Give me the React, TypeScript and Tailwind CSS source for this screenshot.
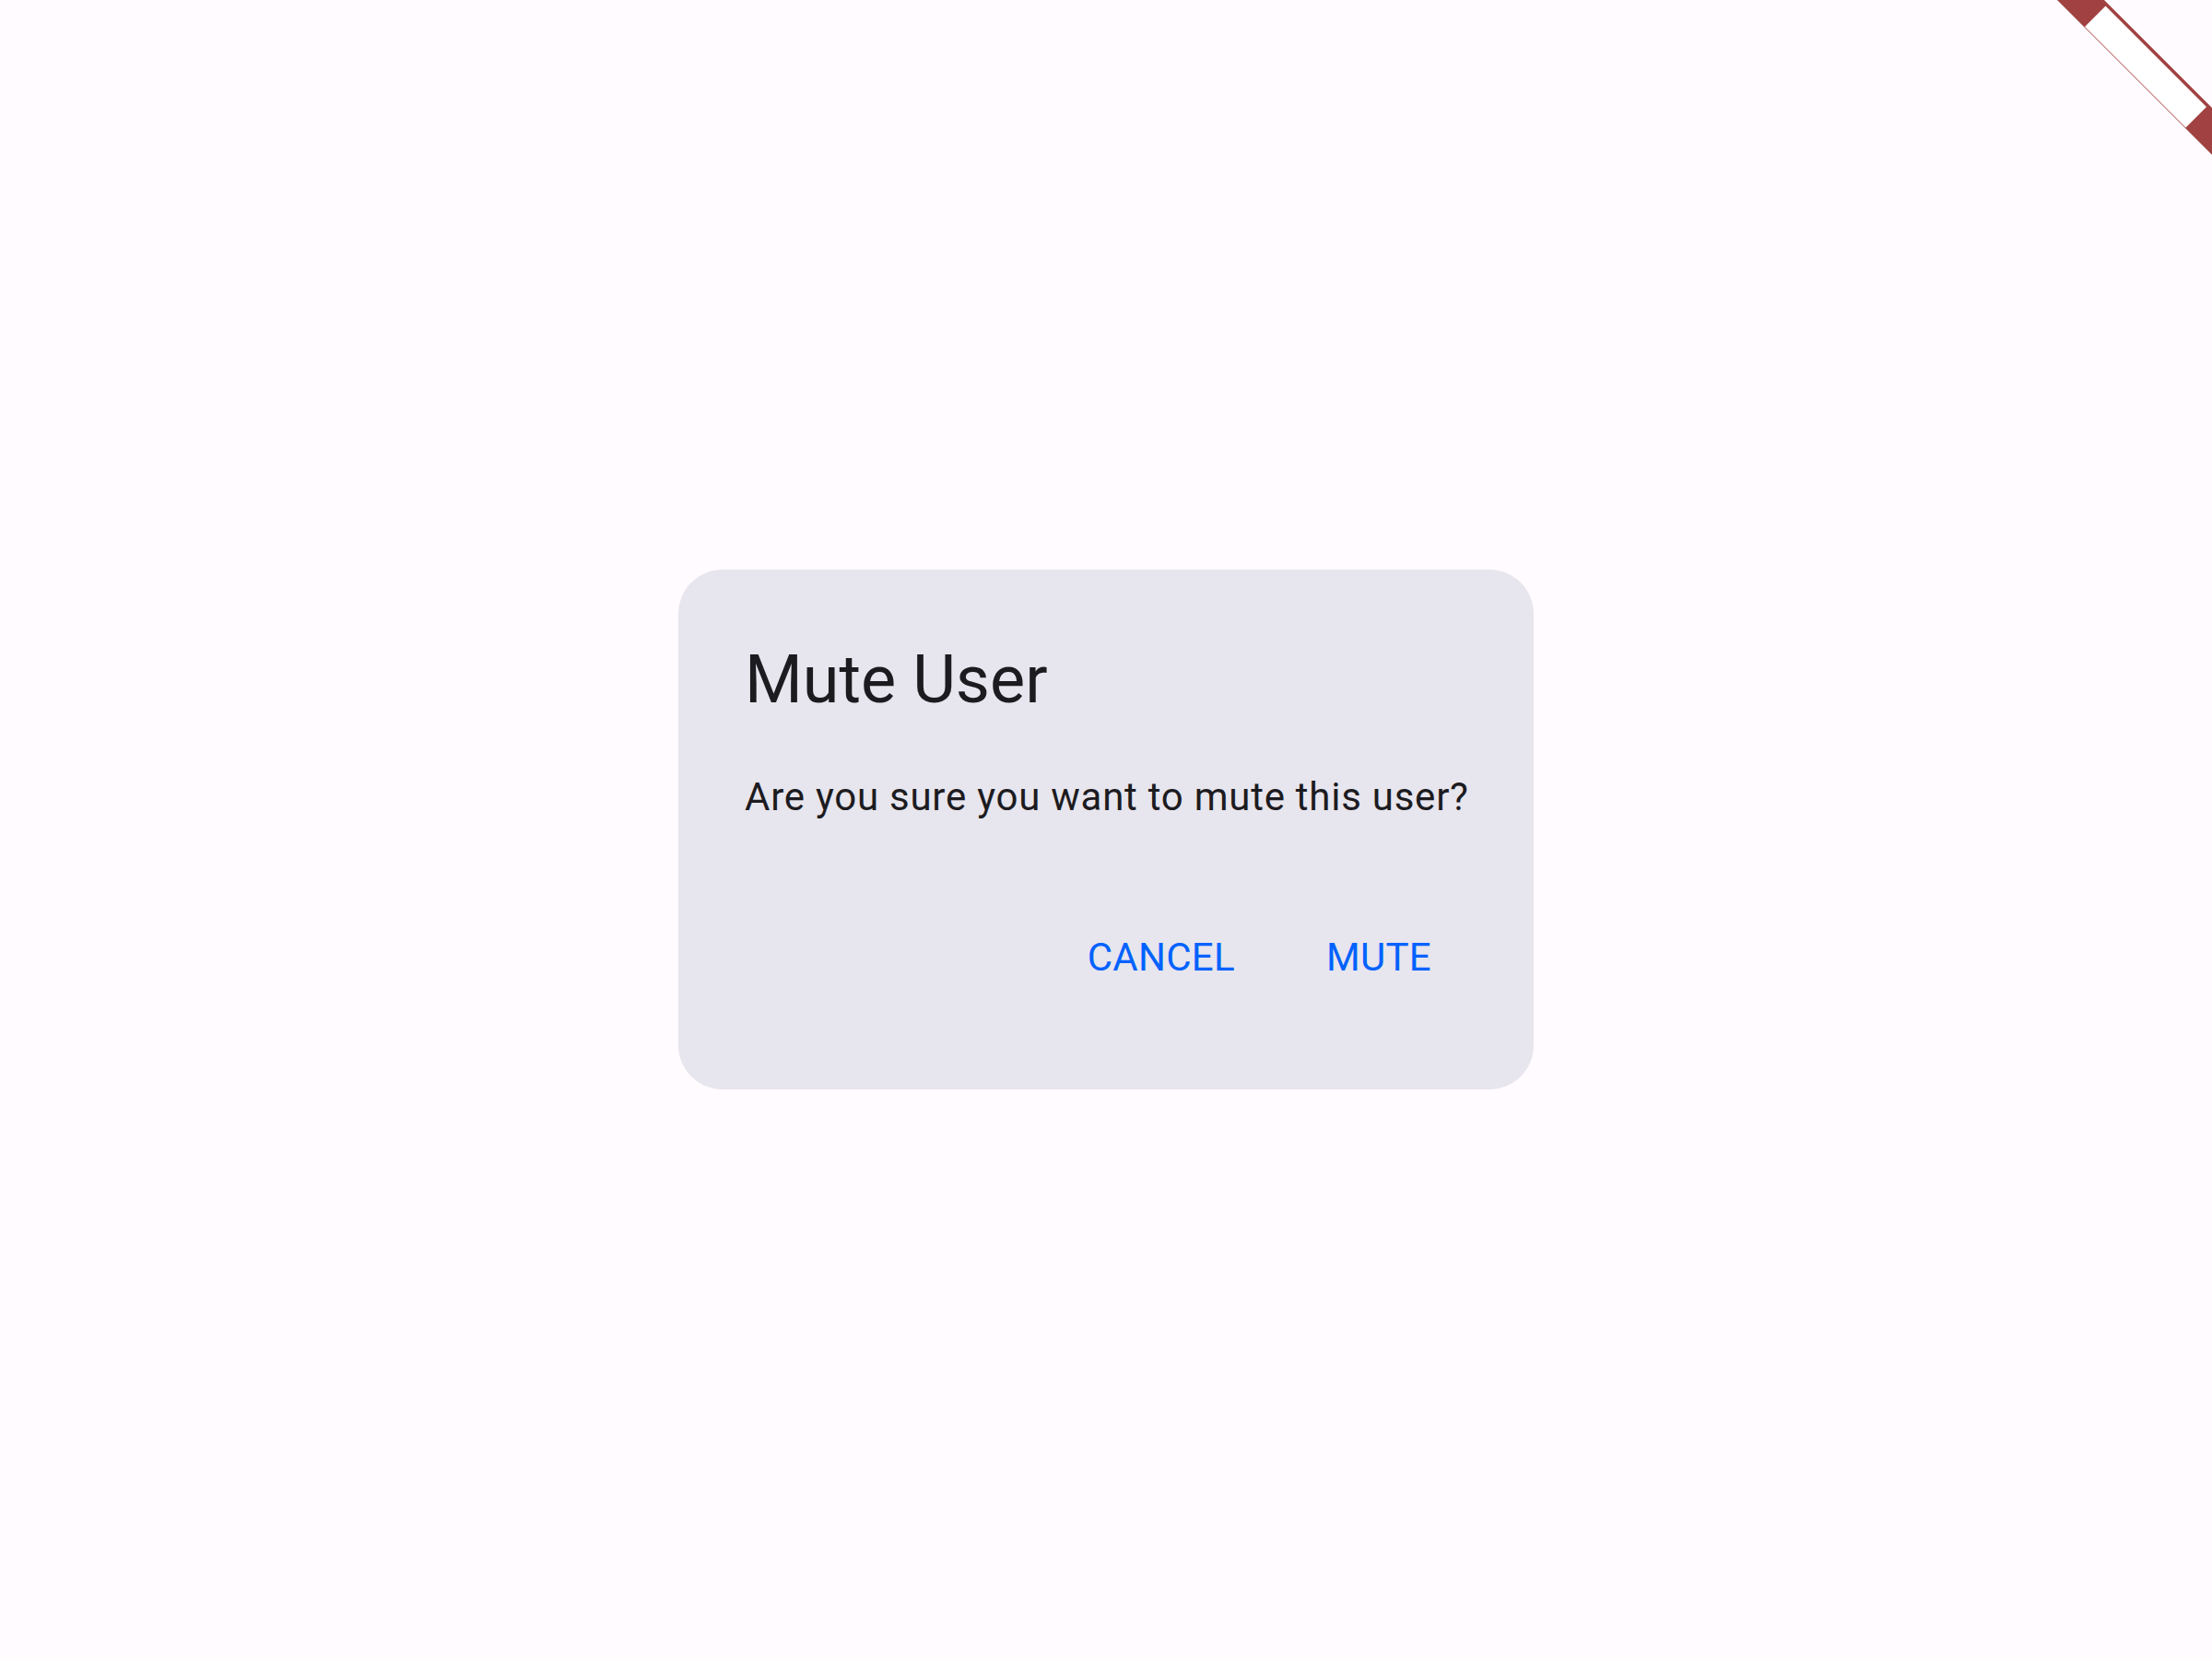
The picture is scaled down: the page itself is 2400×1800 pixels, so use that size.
// Mute user confirmation dialog
export default function App() {
  return (
    <div className="relative min-h-screen w-full bg-[#fffbfe] flex items-center justify-center overflow-hidden font-['Roboto',sans-serif]">
      {/* debug ribbon in the corner */}
      <svg
        className="absolute top-0 right-0"
        width="180"
        height="180"
        viewBox="0 0 180 180"
      >
        <polygon points="12,0 63,0 180,117 180,168" fill="#a14141" />
        <polygon points="42,29 64.5,6.5 174,116 151.5,138.5" fill="#ffffff" />
      </svg>

      <div className="w-[928px] rounded-[48px] bg-[#e7e5ed] p-[72px]">
        <h1 className="text-[72px] leading-[96px] text-[#1c1b1f] font-normal">Mute User</h1>
        <p className="mt-[49px] mb-[-1px] text-[42px] leading-[60px] tracking-[0.75px] text-[#1c1b1f] whitespace-nowrap">
          Are you sure you want to mute this user?
        </p>
        <div className="mt-[72px] pr-[3px] flex justify-end gap-[27px]">
          <button className="h-[144px] px-[36px] text-[42px] tracking-[0.3px] text-[#0062ff]">CANCEL</button>
          <button className="h-[144px] px-[36px] text-[42px] tracking-[0.3px] text-[#0062ff]">MUTE</button>
        </div>
      </div>
    </div>
  );
}
